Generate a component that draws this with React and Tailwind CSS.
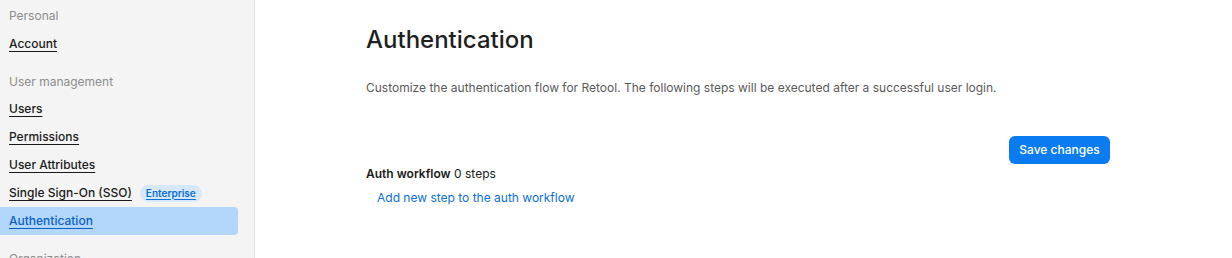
import React from "react";

const NavItem = ({ label, active, badge }) => {
  return (
    <div
      className={`flex items-center h-[28px] pl-[9px] mr-[16px] rounded-r-[4px] ${
        active ? "bg-[#b3d7fb]" : ""
      }`}
    >
      <a
        href="#"
        className={`text-[12px] font-medium underline underline-offset-[3px] decoration-1 ${
          active ? "text-[#0a5fc7]" : "text-[#1a1a1a]"
        }`}
      >
        {label}
      </a>
      {badge && (
        <span className="ml-[8px] h-[17px] px-[6px] rounded-full bg-[#d6e8fb] text-[10px] font-semibold text-[#0a6fd8] flex items-center">
          <span className="underline underline-offset-[2px]">{badge}</span>
        </span>
      )}
    </div>
  );
};

const SectionLabel = ({ children, className = "" }) => (
  <div className={`pl-[9px] text-[12px] text-[#8d8d8d] h-[20px] flex items-center ${className}`}>
    {children}
  </div>
);

export default function App() {
  return (
    <div
      className="flex w-[1232px] h-[258px] overflow-hidden bg-white"
      style={{ fontFamily: "Inter, 'Noto Sans', sans-serif" }}
    >
      {/* sidebar */}
      <div className="w-[255px] shrink-0 bg-[#f4f4f4] border-r border-[#e2e2e2] pt-[6px]">
        <SectionLabel>Personal</SectionLabel>
        <div className="mt-[4px]">
          <NavItem label="Account" />
        </div>
        <SectionLabel className="mt-[14px]">User management</SectionLabel>
        <div className="mt-[3px]">
          <NavItem label="Users" />
          <NavItem label="Permissions" />
          <NavItem label="User Attributes" />
          <NavItem label="Single Sign-On (SSO)" badge="Enterprise" />
          <NavItem label="Authentication" active />
        </div>
        <SectionLabel className="mt-[14px]">Organization</SectionLabel>
      </div>

      {/* main */}
      <div className="flex-1 pl-[111px] pt-[25px]">
        <div className="w-[744px]">
          <h1 className="text-[24px] leading-[30px] font-medium text-[#1f1f1f]">Authentication</h1>
          <p className="mt-[25px] text-[12px] leading-[16px] text-[#5a5a5a]">
            Customize the authentication flow for Retool. The following steps will be executed after a successful user login.
          </p>
          <div className="flex justify-end mt-[40px]">
            <button className="h-[28px] w-[101px] rounded-[6px] bg-[#0a7cf0] text-white text-[12px] font-medium">
              Save changes
            </button>
          </div>
          <div className="mt-[2px] text-[12px] leading-[16px] text-[#1a1a1a]">
            <span className="font-semibold">Auth workflow</span> 0 steps
          </div>
          <div className="mt-[8px] pl-[11px] text-[12px] leading-[16px] text-[#0a6fd8]">
            Add new step to the auth workflow
          </div>
        </div>
      </div>
    </div>
  );
}
